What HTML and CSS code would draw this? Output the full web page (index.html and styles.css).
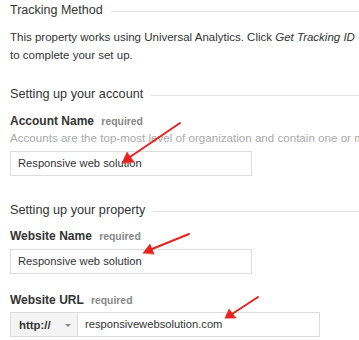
FILE: index.html
```html
<!DOCTYPE html>
<html>
<head>
<meta charset="utf-8">
<link rel="stylesheet" href="styles.css">
</head>
<body>
<div class="page">
  <div class="title title-sm"><span>Tracking Method</span><i class="rule"></i></div>
  <p class="intro">This property works using Universal Analytics. Click <em>Get Tracking ID</em><br>to complete your set up.</p>

  <div class="title title-lg t-account"><span>Setting up your account</span><i class="rule"></i></div>
  <div class="label l-account">Account Name <small>required</small></div>
  <div class="desc">Accounts are the top-most level of organization and contain one or more tracking IDs.</div>
  <div class="field f-account">Responsive web solution</div>

  <div class="title title-lg t-property"><span>Setting up your property</span><i class="rule"></i></div>
  <div class="label l-name">Website Name <small>required</small></div>
  <div class="field f-name">Responsive web solution</div>

  <div class="label l-url">Website URL <small>required</small></div>
  <div class="url-group">
    <div class="proto"><b>http://</b><span class="caret"></span></div>
    <div class="url">responsivewebsolution.com</div>
  </div>
</div>

<svg class="arrows" width="359" height="340" viewBox="0 0 359 340">
  <g stroke="#e8221e" stroke-width="2" stroke-linecap="round" fill="#e8221e">
    <line x1="180" y1="123" x2="130" y2="157"/>
    <polygon points="122,163 127,152 134,162" stroke-width="0.5"/>
    <line x1="189" y1="234" x2="152" y2="249"/>
    <polygon points="143,253 150,244 154,254" stroke-width="0.5"/>
    <line x1="258" y1="297" x2="232" y2="314"/>
    <polygon points="225,318 229,309 236,318" stroke-width="0.5"/>
  </g>
</svg>
</body>
</html>
```

FILE: styles.css
```css
html, body {
  margin: 0;
  padding: 0;
  background: #fff;
  overflow: hidden;
}
body {
  position: relative;
  width: 359px;
  height: 340px;
  font-family: "Liberation Sans", Arial, sans-serif;
  color: #333;
}
.page {
  padding-left: 10px;
  white-space: nowrap;
}
.title {
  display: flex;
  align-items: center;
  gap: 8px;
  color: #333;
}
.title .rule {
  flex: 1;
  height: 1px;
  background: #e3e3e3;
  margin-top: 2px;
}
.title-sm {
  font-size: 12.5px;
  line-height: 16px;
  padding-top: 2px;
}
.title-lg {
  font-size: 12.7px;
  line-height: 18px;
}
.intro {
  margin: 10px 0 0;
  font-size: 11.5px;
  line-height: 18px;
  color: #333;
}
.intro em {
  font-style: italic;
}
.t-account { margin-top: 21px; }
.t-property { margin-top: 25px; }
.label {
  font-size: 12px;
  font-weight: bold;
  line-height: 16px;
  color: #333;
}
.label small {
  font-size: 10.4px;
  color: #888;
  margin-left: 4px;
  font-weight: bold;
}
.l-account { margin-top: 10px; }
.l-name { margin-top: 9px; }
.l-url { margin-top: 18px; }
.desc {
  width: 349px;
  overflow: hidden;
  font-size: 11.6px;
  line-height: 16px;
  color: #aaa;
}
.field {
  box-sizing: border-box;
  width: 242px;
  height: 25px;
  border: 1px solid #dcdcdc;
  padding-left: 7px;
  font-size: 11.2px;
  line-height: 23px;
  color: #333;
}
.f-account { margin-top: 5px; }
.f-name { margin-top: 4px; }
.url-group {
  display: flex;
  margin-top: 3px;
  height: 25px;
}
.proto {
  box-sizing: border-box;
  width: 67px;
  border: 1px solid #dcdcdc;
  border-right: none;
  background: #f4f4f4;
  display: flex;
  align-items: center;
  padding-left: 8px;
  font-size: 11.4px;
  color: #333;
}
.caret {
  width: 0;
  height: 0;
  border-left: 3px solid transparent;
  border-right: 3px solid transparent;
  border-top: 3px solid #888;
  margin-left: 14px;
  margin-top: 2px;
}
.url {
  box-sizing: border-box;
  width: 243px;
  border: 1px solid #dcdcdc;
  padding-left: 7px;
  font-size: 11.2px;
  line-height: 23px;
  color: #333;
}
.arrows {
  position: absolute;
  left: 0;
  top: 0;
  pointer-events: none;
}
```
